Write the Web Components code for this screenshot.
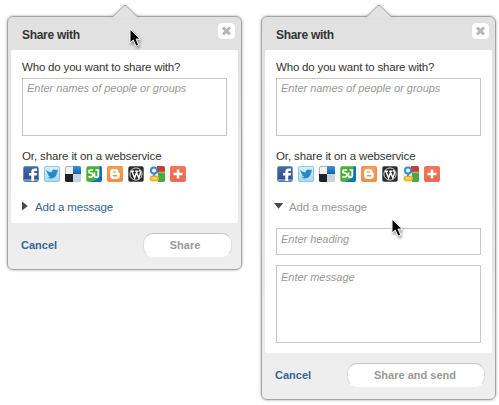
<!DOCTYPE html>
<html lang="en">
<head>
<meta charset="utf-8">
<title>Share with</title>
<style>
body{margin:0;width:499px;height:405px;overflow:hidden;background:#fff;font-family:"Liberation Sans",Arial,sans-serif;color:#333;position:relative}
main{display:flex;align-items:flex-start;gap:19px;padding:16px 0 0 7px}
</style>
</head>
<body>
<main>
<share-panel action="Share">
  <share-field height="58" inset="2">Enter names of people or groups</share-field>
  <message-toggle slot="message">Add a message</message-toggle>
</share-panel>
<share-panel action="Share and send" wide>
  <share-field height="58" inset="2">Enter names of people or groups</share-field>
  <message-toggle slot="message" open>Add a message</message-toggle>
  <share-field slot="message" height="27" inset="3" style="margin-top:13px">Enter heading</share-field>
  <share-field slot="message" height="78" inset="4" style="margin:10px 0 2px">Enter message</share-field>
</share-panel>
</main>
<mouse-pointer style="left:129px;top:28px"></mouse-pointer>
<mouse-pointer style="left:391px;top:218px"></mouse-pointer>
<script>
const define = (name, render) => customElements.define(name, class extends HTMLElement {
  connectedCallback() {
    if (!this.shadowRoot) this.attachShadow({mode: 'open'}).innerHTML = render(this);
  }
});

define('share-field', el => `<style>
:host{display:block;box-sizing:border-box;width:205px;height:${el.getAttribute('height')}px;border:1px solid #c5c5c5;background:#fff;padding:${el.getAttribute('inset')}px 4px;font:italic 11px/14px "Liberation Sans",Arial,sans-serif;color:#999}
</style><slot></slot>`);

define('message-toggle', el => {
  const open = el.hasAttribute('open');
  return `<style>
:host{display:flex;align-items:center;height:16px;font-size:11.5px;line-height:16px;letter-spacing:-.15px;color:${open ? '#999' : '#336699'}}
svg{display:block;width:13px;height:16px;flex:none;overflow:visible}
</style><svg viewBox="0 0 13 16"><path fill="#484848" d="${open ? 'M-2 4H7.2L2.6 9.8Z' : 'M0 2.5V11.5L5.8 7Z'}"/></svg><slot></slot>`;
});

const defs = c => `<rect x=".3" y=".3" width="15.4" height="15.4" rx="1.8" fill="${c}"/>`;
const icons = {
  facebook: `<linearGradient id="g" x2="0" y2="1"><stop stop-color="#466ba8"/><stop offset="1" stop-color="#294d87"/></linearGradient>${defs('url(#g)')}<path d="M1 13h14v2H1z" fill="#6f91c4"/><path d="M8.3 15V9.5H6V7h2.3V5.6C8.3 3.6 9.6 2.5 11.7 2.5H14V5h-1.6c-.9 0-1.2.3-1.2 1v1H14l-.3 2.5h-2.5V15Z" fill="#fff"/>`,
  twitter: `<linearGradient id="g" x2="0" y2="1"><stop stop-color="#d9f0fa"/><stop offset="1" stop-color="#a6d9f2"/></linearGradient>${defs('url(#g)')}<rect x=".5" y=".5" width="15" height="15" rx="1.5" fill="none" stroke="#8bc5e3"/><path d="M2.3 4C4 5.7 5.7 6.2 7.7 6.3C7.6 3.6 10.4 2.6 12 4.1L14.2 3.6L12.9 5.4L14.3 5.5L12.8 7C12.7 11.2 8.3 13.9 3.3 11.6C4.7 11.6 5.7 11.2 6.2 10.6C5 10.3 4.3 9.7 4 8.8H5C3.5 8.1 3 7.2 3 6.3L4 6.6C2.8 5.8 2 5.1 2.3 4Z" fill="#2989c4"/>`,
  delicious: `<rect x=".5" y=".5" width="15" height="15" rx="1.5" fill="#eef2f5" stroke="#a9b7c2"/><linearGradient id="g" x2="0" y2="1"><stop stop-color="#3f94d8"/><stop offset="1" stop-color="#1760a4"/></linearGradient><path d="M8 0h6.2A1.8 1.8 0 0 1 16 1.8V8H8z" fill="url(#g)"/><path d="M0 8h8v8H1.8A1.8 1.8 0 0 1 0 14.2z" fill="#202326"/><path d="M8 8h8v6.2a1.8 1.8 0 0 1-1.8 1.8H8z" fill="#c9d3db"/>`,
  stumbleupon: `${defs('#4cb036')}<path d="M13.5 0h.7Q16 0 16 1.8v12.4Q16 16 14.2 16H2C8 15.5 13.5 13 13.5 8Z" fill="#0875c4"/><path d="M7 4H4.7C2.3 4 2.3 7.2 4.6 7.2H5.2C7.4 7.2 7.3 11 5.1 11H2.3M8.5 6.5V9.4C8.5 11.7 12.3 11.7 12.3 9.4V4H9.5" fill="none" stroke="#fff" stroke-width="1.7"/>`,
  blogger: `<linearGradient id="g" x2="0" y2="1"><stop stop-color="#fa9d59"/><stop offset="1" stop-color="#f48b42"/></linearGradient>${defs('url(#g)')}<rect x=".5" y=".5" width="15" height="15" rx="1.5" fill="none" stroke="#ee8e50"/><path fill="#fff" fill-rule="evenodd" d="M6.1 3H8.6C10.7 3 11.6 4.2 11.6 5.9C11.6 6.6 12 6.9 12.8 7V10.1C12.8 12 11.7 13 9.9 13H6.1C4.3 13 3.2 11.8 3.2 10.1V5.9C3.2 4.2 4.3 3 6.1 3ZM6.1 5.5Q5.5 6.2 6.1 6.8H8.5Q9.2 6.2 8.5 5.5ZM6.1 9.1Q5.5 9.8 6.1 10.5H10Q10.6 9.8 10 9.1Z"/>`,
  wordpress: `${defs('#292b2d')}<circle cx="8" cy="8" r="6.1" fill="#292b2d" stroke="#e9e9e9" stroke-width=".9"/><path d="M2.8 5.2H6M7.2 5.2H10.5M4 5.4L6.6 12L8.2 7.2M8.2 5.4L10.8 12L12.6 6.8C12.7 5.4 11.3 5.2 11.7 3.9" fill="none" stroke="#fff" stroke-width="1.45"/>`,
  google: `<rect width="16" height="16" rx="1.8" fill="#eef7fa"/><path d="M8 0h6.2Q16 0 16 1.8V6.5H8z" fill="#c83d35"/><path d="M9 6.5h7v7.7Q16 16 14.2 16H9z" fill="#46a944"/><path d="M10 5.7h6v1.5h-6z" fill="#a5bd69"/><circle cx="5" cy="4.5" r="3" fill="#fff" stroke="#3d8ac9" stroke-width="2"/><path d="M6 8C3.8 8.7 4.7 9.8 6.1 10.5" fill="none" stroke="#388bc1" stroke-width="1.8"/><ellipse cx="5.4" cy="12.4" rx="4" ry="2.1" fill="#ffd657" stroke="#f1a926" stroke-width="1.6"/>`,
  add: `<linearGradient id="g" x2="0" y2="1"><stop stop-color="#fa7558"/><stop offset="1" stop-color="#ee654c"/></linearGradient>${defs('url(#g)')}<rect x=".5" y=".5" width="15" height="15" rx="1.5" fill="none" stroke="#e47861"/><path d="M8 3.5v9M3.5 8h9" stroke="#fff" stroke-width="2.5"/>`
};
define('service-icon', el => `<style>:host{display:block;width:16px;height:16px}svg{display:block}</style><svg width="16" height="16" viewBox="0 0 16 16">${icons[el.getAttribute('name')]}</svg>`);

define('close-button', () => `<style>
:host{display:flex;align-items:center;justify-content:center;width:17px;height:16px;border-radius:4px;background:#fff;box-shadow:0 0 1px #ccc}
</style><svg width="11" height="10" viewBox="0 0 11 10"><path d="M2 1.5L9 8.5M9 1.5L2 8.5" stroke="#b7b7b7" stroke-width="3.1"/></svg>`);

define('share-panel', el => `<style>
:host{display:block;position:relative;box-sizing:border-box;width:235px;padding:0 3px;border:1px solid #a4a4a4;border-radius:6px;background:linear-gradient(#e1e1e1 0,#e5e5e5 50%,#efefef 100%);box-shadow:0 0 3px rgba(0,0,0,.35)}
.tip{position:absolute;left:103px;top:-13px;filter:drop-shadow(0 -1px 1px rgba(0,0,0,.15))}
header{display:flex;align-items:flex-start;justify-content:space-between;height:33px;box-sizing:border-box;padding:6px 3px 0 11px}
h1{margin:4px 0 0;font-size:12px;line-height:16px;letter-spacing:-.3px}
section{background:#fff;border-radius:2px;padding:9px 11px 8px;font-size:11.5px;line-height:16px;letter-spacing:-.18px}
::slotted(share-field){letter-spacing:-.03px}
p{margin:0}
.who{margin-bottom:3px}
.or{margin-top:12px;letter-spacing:-.11px}
.icons{display:flex;gap:5px;margin:2px 0 17px 1px}
footer{display:flex;align-items:center;justify-content:space-between;height:46px;box-sizing:border-box;padding:0 ${el.hasAttribute('wide') ? 7 : 6}px 2px 10px;font:bold 11px/14px "Liberation Sans",Arial,sans-serif;letter-spacing:0}
a{color:#336699}
button{box-sizing:border-box;width:${el.hasAttribute('wide') ? 138 : 89}px;height:24px;padding:0 ${el.hasAttribute('wide') ? 2 : 5}px 1px 0;border:1px solid #ddd;border-top-color:#c4c4c4;border-bottom-color:#fff;border-radius:10px;background:#fff;color:#999;font:inherit}
</style>
<svg class="tip" width="28" height="14" viewBox="0 0 28 14"><path d="M0 14V13H1.5L14 1.5L26.5 13H28V14Z" fill="#e2e2e2"/><path d="M1.5 13L12.8 1.8Q14 .8 15.2 1.8L26.5 13" fill="none" stroke="#a4a4a4"/></svg>
<header><h1>Share with</h1><close-button></close-button></header>
<section>
<p class="who">Who do you want to share with?</p>
<slot></slot>
<p class="or">Or, share it on a webservice</p>
<div class="icons">${Object.keys(icons).map(n => `<service-icon name="${n}"></service-icon>`).join('')}</div>
<slot name="message"></slot>
</section>
<footer><a>Cancel</a><button>${el.getAttribute('action')}</button></footer>`);

define('mouse-pointer', () => `<style>:host{display:block;position:absolute}svg{display:block;overflow:visible;filter:drop-shadow(1px 2px 1.5px rgba(0,0,0,.4))}</style>
<svg width="13" height="20" viewBox="0 0 13 20"><path d="M1 1.2V15L4.3 12L7 18.2L9.7 17L7.1 11.1H11.3Z" fill="#000" stroke="#fff" stroke-width="1"/></svg>`);
</script>
</body>
</html>
